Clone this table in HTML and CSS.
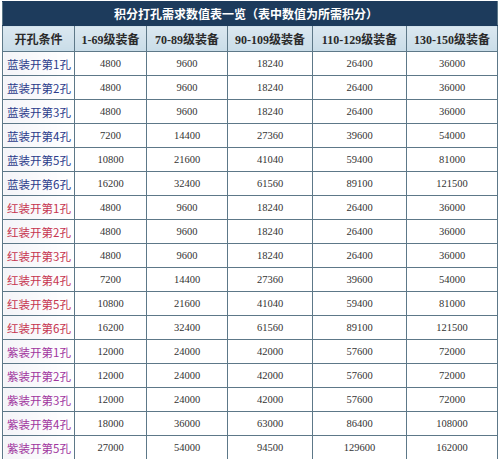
FILE: index.html
```html
<!DOCTYPE html>
<html lang="zh-CN">
<head>
<meta charset="utf-8">
<title>积分打孔需求数值表一览</title>
<link rel="stylesheet" href="styles.css">
</head>
<body>
<table class="sheet">
  <colgroup>
    <col class="c1"><col class="c2"><col class="c3"><col class="c4"><col class="c5"><col class="c6">
  </colgroup>
  <thead>
    <tr class="title-row"><th colspan="6">积分打孔需求数值表一览（表中数值为所需积分）</th></tr>
    <tr class="head-row">
      <th>开孔条件</th><th>1-69级装备</th><th>70-89级装备</th><th>90-109级装备</th><th>110-129级装备</th><th>130-150级装备</th>
    </tr>
  </thead>
  <tbody>
    <tr><td class="name blue">蓝装开第1孔</td><td>4800</td><td>9600</td><td>18240</td><td>26400</td><td>36000</td></tr>
    <tr><td class="name blue">蓝装开第2孔</td><td>4800</td><td>9600</td><td>18240</td><td>26400</td><td>36000</td></tr>
    <tr><td class="name blue">蓝装开第3孔</td><td>4800</td><td>9600</td><td>18240</td><td>26400</td><td>36000</td></tr>
    <tr><td class="name blue">蓝装开第4孔</td><td>7200</td><td>14400</td><td>27360</td><td>39600</td><td>54000</td></tr>
    <tr><td class="name blue">蓝装开第5孔</td><td>10800</td><td>21600</td><td>41040</td><td>59400</td><td>81000</td></tr>
    <tr><td class="name blue">蓝装开第6孔</td><td>16200</td><td>32400</td><td>61560</td><td>89100</td><td>121500</td></tr>
    <tr><td class="name red">红装开第1孔</td><td>4800</td><td>9600</td><td>18240</td><td>26400</td><td>36000</td></tr>
    <tr><td class="name red">红装开第2孔</td><td>4800</td><td>9600</td><td>18240</td><td>26400</td><td>36000</td></tr>
    <tr><td class="name red">红装开第3孔</td><td>4800</td><td>9600</td><td>18240</td><td>26400</td><td>36000</td></tr>
    <tr><td class="name red">红装开第4孔</td><td>7200</td><td>14400</td><td>27360</td><td>39600</td><td>54000</td></tr>
    <tr><td class="name red">红装开第5孔</td><td>10800</td><td>21600</td><td>41040</td><td>59400</td><td>81000</td></tr>
    <tr><td class="name red">红装开第6孔</td><td>16200</td><td>32400</td><td>61560</td><td>89100</td><td>121500</td></tr>
    <tr><td class="name purple">紫装开第1孔</td><td>12000</td><td>24000</td><td>42000</td><td>57600</td><td>72000</td></tr>
    <tr><td class="name purple">紫装开第2孔</td><td>12000</td><td>24000</td><td>42000</td><td>57600</td><td>72000</td></tr>
    <tr><td class="name purple">紫装开第3孔</td><td>12000</td><td>24000</td><td>42000</td><td>57600</td><td>72000</td></tr>
    <tr><td class="name purple">紫装开第4孔</td><td>18000</td><td>36000</td><td>63000</td><td>86400</td><td>108000</td></tr>
    <tr><td class="name purple">紫装开第5孔</td><td>27000</td><td>54000</td><td>94500</td><td>129600</td><td>162000</td></tr>
  </tbody>
</table>
</body>
</html>
```
FILE: styles.css
```css
html, body {
  margin: 0;
  padding: 0;
  background: #ffffff;
}
.sheet {
  margin: 1px 0 0 2px;
  width: 495px;
  table-layout: fixed;
  border-collapse: collapse;
  font-family: "Liberation Serif", "Noto Sans CJK SC", serif;
  color: #333333;
}
.c1 { width: 72px; }
.c2 { width: 72px; }
.c3 { width: 81px; }
.c4 { width: 85px; }
.c5 { width: 94px; }
.c6 { width: 91px; }
.sheet th,
.sheet td {
  border: 1px solid #5d7888;
  padding: 0;
  text-align: center;
  vertical-align: middle;
  overflow: hidden;
  white-space: nowrap;
}
.title-row th {
  height: 23px;
  background: #1d3b5c;
  color: #ffffff;
  font-family: "Noto Sans CJK SC", sans-serif;
  font-weight: bold;
  font-size: 12px;
  padding-right: 8px;
  border-color: #1d3b5c #5d7888 #1d3b5c #5d7888;
}
.head-row th {
  height: 25px;
  background: linear-gradient(#dbe8f0, #c9dce8);
  color: #2a2a2a;
  font-family: "Liberation Serif", "Noto Sans CJK SC", serif;
  font-weight: bold;
  font-size: 12px;
}
.sheet td {
  height: 23px;
  font-size: 10.5px;
  background: #ffffff;
}
.sheet td.name {
  text-align: left;
  padding-left: 4px;
  font-family: "Noto Sans CJK SC", sans-serif;
  font-size: 11.5px;
  background: linear-gradient(90deg, #f4f4f8, #ffffff);
}
.blue { color: #2b3a8a; }
.red { color: #c6344f; }
.purple { color: #a0359e; }
```
